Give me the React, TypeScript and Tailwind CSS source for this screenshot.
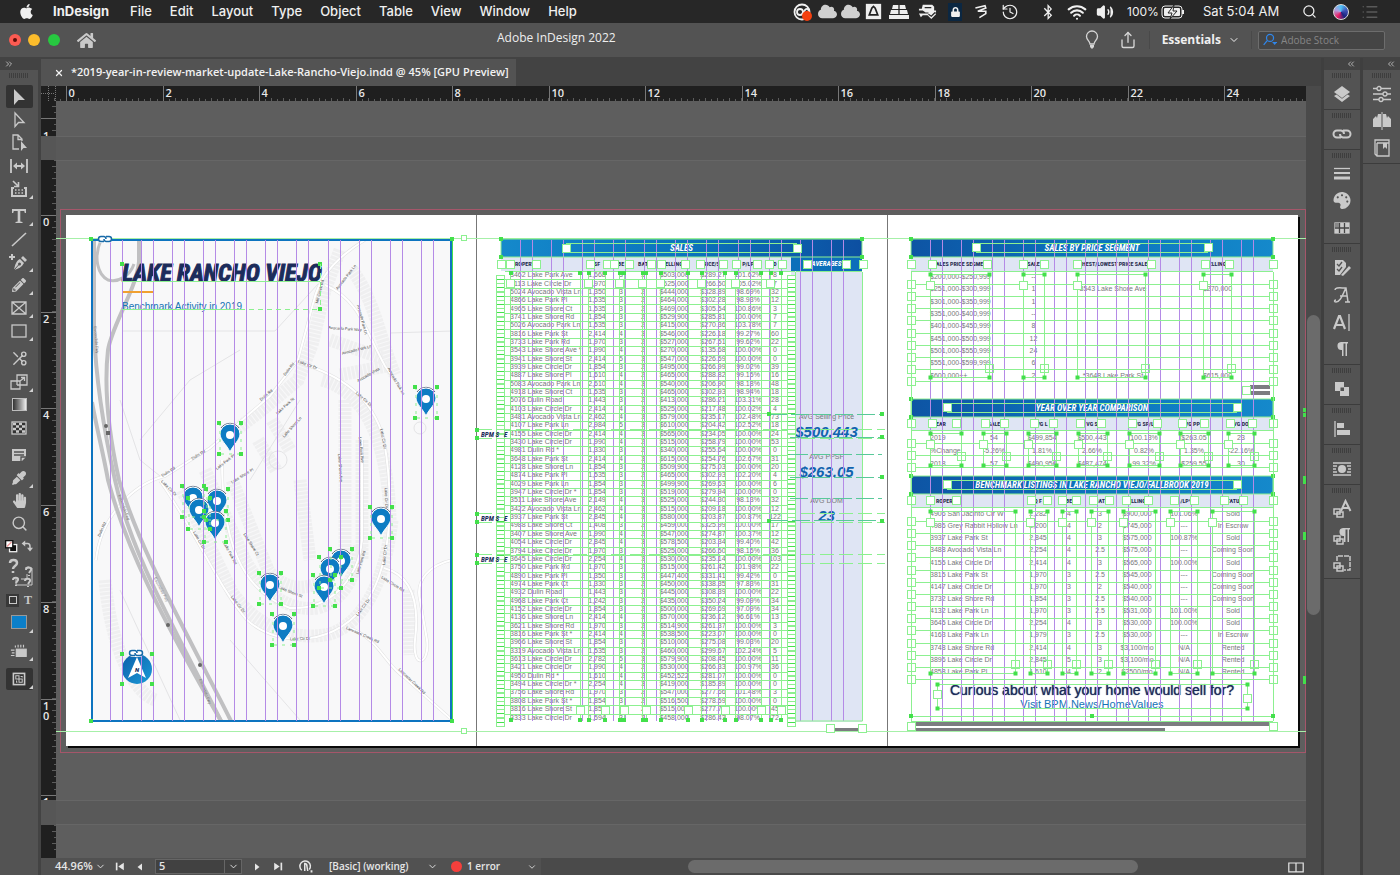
import { ReactNode } from 'react'
import {
  FaApple,
  FaBluetoothB,
  FaEyeDropper,
  FaHandPaper,
  FaHome,
  FaLock,
  FaPalette,
  FaPenNib,
  FaPencilAlt,
  FaCloud,
} from 'react-icons/fa'
import {
  ChevronDown,
  ChevronsLeft,
  ChevronsRight,
  History,
  List,
  Scissors,
  Search,
  Share,
  Volume2,
  Wifi,
  X,
} from 'lucide-react'

type Sale = [string, string, string, string, string, string, string, string]

const sales: Sale[] = [
  ['3462 Lake Park Ave', '1,668', '3', '3', '$503,000', '$289.27', '101.62%', '8'],
  ['3113 Lake Circle Dr', '1,970', '3', '3', '$525,000', '$266.50', '105.02%', '7'],
  ['5024 Avocado Vista Ln', '1,350', '3', '2', '$444,000', '$328.89', '98.69%', '32'],
  ['4866 Lake Park Pl', '1,535', '3', '2', '$464,000', '$302.28', '98.93%', '12'],
  ['4965 Lake Shore Ct', '1,535', '3', '2', '$469,000', '$305.54', '100.86%', '3'],
  ['3741 Lake Shore Rd', '1,854', '3', '2', '$529,900', '$285.81', '100.00%', '7'],
  ['5026 Avocado Park Ln', '1,535', '3', '2', '$415,000', '$270.36', '103.78%', '7'],
  ['3816 Lake Park St', '2,414', '4', '3', '$546,000', '$226.18', '99.27%', '60'],
  ['3733 Lake Park Rd', '1,970', '3', '2', '$527,000', '$267.51', '99.62%', '22'],
  ['3543 Lake Shore Ave *', '1,990', '4', '2', '$270,000', '$135.68', '100.00%', '0'],
  ['3941 Lake Shore St', '2,414', '5', '3', '$547,000', '$226.59', '100.00%', '0'],
  ['3939 Lake Circle Dr', '1,854', '3', '2', '$495,000', '$266.99', '99.02%', '39'],
  ['4887 Lake Shore Pl', '1,610', '4', '2', '$465,000', '$288.82', '99.15%', '16'],
  ['5083 Avocado Park Ln', '2,610', '4', '3', '$540,000', '$206.90', '98.18%', '48'],
  ['4918 Lake Shore Ct', '1,535', '3', '2', '$465,000', '$302.93', '98.94%', '18'],
  ['5076 Dulin Road', '1,443', '3', '2', '$413,000', '$286.21', '103.31%', '28'],
  ['4103 Lake Circle Dr', '2,414', '4', '3', '$525,000', '$217.48', '100.02%', '4'],
  ['3481 Avocado Vista Ln', '2,462', '4', '3', '$579,000', '$235.17', '102.48%', '73'],
  ['4107 Lake Park Ln', '2,984', '5', '3', '$610,000', '$204.42', '102.52%', '18'],
  ['4155 Lake Circle Dr', '2,414', '4', '3', '$565,000', '$234.05', '100.00%', '24'],
  ['3430 Lake Circle Dr', '1,990', '4', '2', '$515,000', '$258.79', '100.00%', '53'],
  ['4981 Dulin Rd *', '1,330', '3', '2', '$340,000', '$255.64', '100.00%', '0'],
  ['3648 Lake Park St', '2,414', '4', '3', '$615,000', '$254.76', '102.67%', '31'],
  ['4128 Lake Shore Ln', '1,854', '3', '2', '$509,900', '$275.03', '100.00%', '20'],
  ['4874 Lake Park Pl', '1,535', '3', '2', '$465,000', '$302.93', '102.20%', '4'],
  ['4029 Lake Park Ln', '1,854', '3', '2', '$499,900', '$269.63', '100.00%', '6'],
  ['3947 Lake Circle Dr *', '1,854', '3', '2', '$519,000', '$279.94', '100.00%', '0'],
  ['3511 Lake Shore Ave', '2,149', '4', '3', '$525,000', '$244.30', '98.13%', '32'],
  ['3422 Avocado Vista Ln', '2,462', '4', '3', '$515,000', '$209.18', '100.00%', '12'],
  ['3937 Lake Park St', '2,845', '4', '3', '$580,000', '$203.87', '100.87%', '122'],
  ['4988 Lake Shore Ct', '1,408', '3', '2', '$459,000', '$325.99', '100.00%', '17'],
  ['3407 Lake Shore Ave', '1,990', '4', '2', '$547,000', '$274.87', '100.37%', '12'],
  ['4054 Lake Circle Dr', '2,845', '4', '3', '$578,500', '$203.34', '99.40%', '42'],
  ['3794 Lake Circle Dr', '1,970', '3', '2', '$525,000', '$266.50', '98.15%', '36'],
  ['3645 Lake Circle Dr', '2,254', '4', '3', '$530,000', '$235.14', '100.00%', '103'],
  ['3750 Lake Park Rd', '1,970', '3', '2', '$515,000', '$261.42', '101.98%', '22'],
  ['4890 Lake Park Pl', '1,350', '3', '2', '$447,400', '$331.41', '99.42%', '0'],
  ['4974 Lake Park Ct', '1,330', '3', '2', '$450,000', '$338.35', '97.83%', '31'],
  ['4932 Dulin Road', '1,443', '3', '2', '$445,000', '$308.39', '100.00%', '22'],
  ['4968 Lake Park Ct', '1,242', '3', '2', '$435,000', '$350.24', '99.09%', '34'],
  ['4152 Lake Circle Dr', '1,854', '3', '2', '$500,000', '$269.69', '97.09%', '34'],
  ['4136 Lake Shore Ln', '2,414', '4', '3', '$570,000', '$236.12', '96.61%', '13'],
  ['3621 Lake Shore Rd', '1,970', '3', '2', '$514,900', '$261.37', '100.00%', '3'],
  ['3816 Lake Park St *', '2,414', '4', '3', '$538,500', '$223.07', '100.00%', '0'],
  ['3966 Lake Shore St', '1,854', '3', '2', '$510,000', '$275.08', '99.03%', '20'],
  ['3319 Avocado Vista Ln', '1,535', '3', '2', '$460,000', '$299.67', '102.24%', '5'],
  ['3613 Lake Circle Dr', '2,782', '5', '3', '$579,900', '$208.45', '100.00%', '11'],
  ['3421 Lake Circle Dr', '1,990', '4', '2', '$530,000', '$266.33', '100.97%', '36'],
  ['4950 Dulin Rd *', '1,610', '4', '2', '$452,522', '$281.07', '100.00%', '0'],
  ['3494 Lake Circle Dr *', '2,254', '4', '3', '$419,000', '$185.89', '100.00%', '0'],
  ['3756 Lake Shore Rd', '1,970', '3', '2', '$547,000', '$277.66', '101.48%', '3'],
  ['3808 Lake Park St *', '1,854', '3', '2', '$516,500', '$278.59', '100.00%', '0'],
  ['3816 Lake Shore St', '1,854', '3', '2', '$515,000', '$277.78', '100.00%', '45'],
  ['3333 Lake Circle Dr', '1,594', '3', '2', '$458,000', '$286.43', '98.07%', '72'],
]

const segments = [
  ['$200,000-$250,999', '--', '', ''],
  ['$251,000-$300,999', '1', '3543 Lake Shore Ave', '$270,000'],
  ['$301,000-$350,999', '1', '', ''],
  ['$351,000-$400,999', '--', '', ''],
  ['$401,000-$450,999', '8', '', ''],
  ['$451,000-$500,999', '12', '', ''],
  ['$501,000-$550,999', '24', '', ''],
  ['$551,000-$599,999', '6', '', ''],
  ['$600,000++', '2', '*3648 Lake Park St', '$615,000'],
]

const comparison = [
  ['2019', '54', '$499,854', '$500,443', '100.13%', '$263.05', '23', ''],
  ['%Change', '-5.26%', '1.81%', '2.66%', '0.82%', '1.35%', '-22.16%', ''],
  ['2018', '57', '$490,956', '$487,474', '99.32%', '$259.55', '30', ''],
]

const listings = [
  ['4906 San Jacinto Cir W', '2,282', '4', '3', '$900,000', '101.06%', 'Sold', ''],
  ['4986 Grey Rabbit Hollow Ln', '2,200', '4', '2', '$745,000', '---', 'In Escrow', ''],
  ['3937 Lake Park St', '2,845', '4', '3', '$575,000', '100.87%', 'Sold', ''],
  ['3488 Avocado Vista Ln', '2,254', '4', '2.5', '$575,000', '---', 'Coming Soon', ''],
  ['4155 Lake Circle Dr', '2,414', '4', '3', '$565,000', '100.00%', 'Sold', ''],
  ['3815 Lake Park St', '1,970', '3', '2.5', '$545,000', '---', 'Coming Soon', ''],
  ['4147 Lake Circle Dr', '1,970', '3', '2', '$540,000', '---', 'Coming Soon', ''],
  ['3732 Lake Shore Rd', '1,854', '3', '2.5', '$540,000', '---', 'Coming Soon', ''],
  ['4132 Lake Park Ln', '1,970', '3', '2.5', '$531,000', '101.00%', 'Sold', ''],
  ['3645 Lake Circle Dr', '2,254', '4', '3', '$530,000', '100.00%', 'Sold', ''],
  ['4163 Lake Park Ln', '1,979', '3', '2.5', '$530,000', '---', 'In Escrow', ''],
  ['3748 Lake Shore Rd', '2,414', '4', '3', '$3,100/mo', 'N/A', 'Rented', ''],
  ['3896 Lake Circle Dr', '2,845', '5', '3', '$3,100/mo', 'N/A', 'Rented', ''],
  ['4858 Lake Park Pl', '1,610', '4', '2', '$2500/mo', 'N/A', 'Rented', ''],
]

// Head centres of the sale pins
const pins = [
  [230, 435], [426, 399], [193, 498], [217, 501], [199, 510], [215, 523],
  [381, 519], [270, 585], [283, 626], [341, 561], [330, 569], [324, 587],
]

const streets: [string, number, number, number][] = [
  ['Avocado Park Ln', 347, 278, -52],
  ['Mill Creek Rd', 321, 292, -75],
  ['Avocado Park Way', 345, 330, 4],
  ['Avocado Park Ln', 361, 320, 75],
  ['Avocado Park Ln', 357, 351, -14],
  ['Avocado Vista', 369, 376, -30],
  ['Avocado Park Ln', 395, 382, 60],
  ['Dulin Rd', 290, 370, -52],
  ['Dulin Rd', 267, 396, -40],
  ['Lake Cir Dr', 307, 366, 20],
  ['Lake Park St', 286, 407, -42],
  ['Lake Shore Ln', 293, 428, -48],
  ['Lake Cir Dr', 363, 400, 42],
  ['Lake Park Ave', 360, 450, 84],
  ['Lake Cir Dr', 382, 439, 80],
  ['Lake Shore Ave', 339, 468, 86],
  ['Dulin Rd', 199, 456, -32],
  ['Dulin Rd', 169, 473, -32],
  ['Lake Park Pl', 226, 463, -38],
  ['Lake Shore Pl', 243, 477, -32],
  ['Dulin Rd', 103, 530, -66],
  ['Lake Cir Dr', 168, 489, 45],
  ['Lake Cir Dr', 198, 541, 60],
  ['Lake Park Rd', 229, 554, 62],
  ['Lake Shore Ct', 250, 545, 58],
  ['Lake Cir Dr', 237, 605, 52],
  ['Lake Shore St', 290, 593, 22],
  ['Lake Cir Dr', 300, 640, -2],
  ['Lake Park Rd', 362, 563, -72],
  ['Lake Cir Dr', 386, 555, -84],
  ['Lake Cir Dr', 364, 608, -54],
  ['Lake Circle Rd', 392, 585, 32],
  ['Lancaster Creek Rd', 362, 636, 24],
  ['Lancaster Creek Rd', 411, 682, 44],
  ['Lake Cir Dr', 385, 498, 88],
]

const GREEN = '#43e04b'
const LINE = '#8cf090'
const HAIR = '#b48ae6'

const columnStarts = [91, 501, 911]

// One small square grab point on a text or picture frame
const Dot = ({ x, y }: { x: number; y: number }) => (
  <rect x={x - 2} y={y - 2} width="4" height="4" fill={GREEN} />
)

// In and out ports of a text frame
const Port = ({ x, y, solid = true }: { x: number; y: number; solid?: boolean }) => (
  <rect x={x - 3.5} y={y - 3.5} width="8" height="8" fill={solid ? '#fff' : 'none'} stroke={LINE} />
)

const Frame = ({ x1, x2, y1, y2 }: { x1: number; x2: number; y1: number; y2: number }) => (
  <g>
    <rect x={x1} y={y1} width={x2 - x1} height={y2 - y1} fill="none" stroke={LINE} />
    <Dot x={x1} y={y1} />
    <Dot x={x2} y={y1} />
    <Dot x={x1} y={y2} />
    <Dot x={x2} y={y2} />
  </g>
)

const ColumnGuides = () => (
  <g stroke={HAIR}>
    {columnStarts.map((start) =>
      Array.from({ length: 11 }, (_, k) => {
        const left = Math.round(start + k * 31.15 + 18.5) + 0.5
        return <path key={`${start}-${k}`} d={`M${left} 240V721M${left + 12} 240V721`} />
      })
    )}
  </g>
)

const roads = [
  'M96 560C100 520 130 485 165 476L210 448L270 396L298 360L314 300C320 275 340 255 365 240',
  'M297 362C340 375 372 395 384 440C394 500 392 560 368 600C340 645 280 650 247 620C220 590 195 530 160 481',
  'M325 285C360 300 365 330 385 366L402 390',
  'M384 568C410 575 420 600 415 640C412 670 430 665 427 640L420 600C415 580 430 565 452 560',
  'M350 628C380 640 385 665 405 678L452 720',
  'M222 460C222 540 240 590 290 608C330 610 358 580 362 540V440',
]

function MapArt() {
  return (
    <svg viewBox="91 239 361 483" className="block h-full w-full" role="img" aria-label="Map of Lake Rancho Viejo">
      <defs>
        <linearGradient id="badge" x1="0" x2="1" y1="0" y2="1">
          <stop offset="0" stopColor="#0c5ea9" />
          <stop offset="1" stopColor="#1b9bd8" />
        </linearGradient>
      </defs>
      <rect x="91" y="239" width="361" height="483" fill="#f8f8f9" />
      <g fill="none" stroke="#efeff0" strokeWidth="13" strokeDasharray="3 1">
        <path d="M340 250L325 290L312 345L298 380L262 410L228 436" />
        <path d="M352 270C375 300 380 340 395 375" />
        <path d="M330 340L382 358M340 375L392 365M322 380C365 392 388 440 390 520" />
        <path d="M345 400V560M362 440V560" />
        <path d="M182 490L232 592C255 625 290 642 330 634C365 622 385 580 392 520" />
        <path d="M205 470L245 560C262 590 285 612 318 608C345 600 356 575 360 545" />
        <path d="M232 480L268 570C285 592 310 592 330 575M272 420L290 450M258 440L276 470" />
        <path d="M408 590L410 655M300 480L310 560" />
        <path d="M105 580C110 640 130 690 155 700" />
      </g>
      <g fill="none" stroke="#e0e0e1" strokeWidth="3">
        {roads.map((d) => (
          <path key={d} d={d} />
        ))}
      </g>
      <g fill="none" stroke="#fff" strokeWidth="2">
        {roads.map((d) => (
          <path key={d} d={d} />
        ))}
      </g>
      <g fill="none" stroke="#e4e4e6" strokeWidth="1">
        <path d="M122 331H275L318 284M390 333L452 331M120 400L140 460L160 476M250 480L300 400M120 590L180 720M230 640L300 720M140 440L190 380L240 350" />
        <circle cx="420" cy="428" r="6" />
        <circle cx="278" cy="460" r="9" />
      </g>
      <g fill="none" stroke="#c0c0c2">
        <path strokeWidth="4" d="M94 240V330C96 385 106 440 115 480C130 550 170 620 221 721" />
        <path strokeWidth="4" d="M92 402C97 430 103 452 108 480C125 545 160 615 221 721" />
        <path strokeWidth="4" d="M139 240V262C136 290 112 325 108 350C104 385 108 430 119 480C140 550 180 620 231 721" />
        <path strokeWidth="3" d="M101 240C93 258 98 275 108 280C118 283 130 276 134 264" />
      </g>
      <g fill="#666">
        <circle cx="106" cy="426" r="2" />
        <rect x="106" y="431" width="4" height="4" />
        <circle cx="168" cy="625" r="2" />
        <circle cx="200" cy="665" r="2" />
      </g>
      <g fill="#444" fontFamily="Liberation Sans, sans-serif" fontSize="4" textAnchor="middle">
        {streets.map(([name, x, y, angle], i) => (
          <text key={i} transform={`translate(${x} ${y}) rotate(${angle})`}>
            {name}
          </text>
        ))}
        {[
          [123, 508, 70],
          [160, 590, 62],
          [204, 692, 68],
          [95, 340, 85],
        ].map(([x, y, angle]) => (
          <text key={x} fill="#7a7a7c" transform={`translate(${x} ${y}) rotate(${angle})`}>
            Escondido Fwy
          </text>
        ))}
      </g>
      {pins.map(([x, y]) => (
        <g key={`${x}-${y}`} transform={`translate(${x} ${y})`}>
          <path d="M-9 -7A11 11 0 0 1 9 -7" fill="none" stroke="#5d6a80" strokeWidth="1" />
          <path
            d="M0 17C-3 10 -10 5 -10 -1A10 10 0 0 1 10 -1C10 5 3 10 0 17Z"
            fill="#0d7cc3"
            stroke="#fff"
            strokeWidth="1"
          />
          <circle r="4" fill="#fff" />
        </g>
      ))}
      <circle cx="137" cy="669" r="15" fill="url(#badge)" />
      <path d="M137 657L146 678L137 673L128 678Z" fill="#fff" />
      <text x="137" y="672" textAnchor="middle" fontSize="6" fontWeight="900" fontStyle="italic" fontFamily="Roboto, sans-serif" fill="#16305e">
        N
      </text>
    </svg>
  )
}

const Bar = ({ children, reverse }: { children: ReactNode; reverse?: boolean }) => (
  <h2
    className={`h-[18px] text-center text-[9px] leading-[18px] font-bold italic text-white font-['Liberation_Sans_Narrow','Roboto_Condensed','Roboto',sans-serif] ${
      reverse
        ? 'bg-linear-to-r from-[#0e54a4] via-[#0b74bd] to-[#1589cb]'
        : 'bg-linear-to-r from-[#1589cb] via-[#0b74bd] to-[#0d4fa1]'
    }`}
  >
    {children}
  </h2>
)

interface GridTableProps {
  label: string
  heads: string[]
  rows: string[][]
  cols: string[]
  height: string
  inset?: boolean
}

function GridTable({ label, heads, rows, cols, height, inset }: GridTableProps) {
  return (
    <table aria-label={label} className={`w-full table-fixed text-[7px] leading-[8px] text-[#77787b] ${height}`}>
      <colgroup>
        {cols.map((c, i) => (
          <col key={i} className={c} />
        ))}
      </colgroup>
      <thead>
        <tr className="h-[14px] bg-[#dfe5f4] text-[#1f2a4d] font-['Liberation_Sans_Narrow','Roboto_Condensed','Roboto',sans-serif]">
          {heads.map((h, i) => (
            <th
              key={i}
              className={`p-0 text-[6px] font-bold whitespace-nowrap ${i === 0 ? (inset ? 'pl-[25px] text-left' : 'pl-[14px] text-left') : ''}`}
            >
              {h}
            </th>
          ))}
        </tr>
      </thead>
      <tbody>
        {rows.map((row, r) => (
          <tr key={r}>
            {row.map((cell, i) => (
              <td
                key={i}
                className={`p-0 whitespace-nowrap ${i === 0 ? (inset ? 'pl-[19px] text-left' : 'pl-[9px] text-left') : 'text-center'}`}
              >
                {cell}
              </td>
            ))}
          </tr>
        ))}
      </tbody>
    </table>
  )
}

const Average = ({ label, value }: { label: string; value: string }) => (
  <div className="text-center">
    <dt className="text-[7px] leading-[10px] text-[#77787b]">{label}</dt>
    <dd className="text-[15px] leading-[20px] font-bold italic text-[#1163ae]">{value}</dd>
  </div>
)

function Spread() {
  return (
    <div className="absolute top-[114px] left-[10px] flex h-[531px] bg-white shadow-[2px_2px_0_#0a0a0a] font-['Liberation_Sans',Arial,sans-serif]">
      <section className="relative w-[411px] border-r border-[#777] pt-[24px] pl-[25px]">
        <div className="h-[483px] w-[361px] outline-2 -outline-offset-2 outline-[#0d74c0]">
          <MapArt />
        </div>
        <div className="absolute top-[46px] left-[56px]">
          <h1 className="text-[24px] leading-[24px] font-bold italic whitespace-nowrap text-[#1c2c5b] [-webkit-text-stroke:1px_#1c2c5b] font-['Liberation_Sans_Narrow','Roboto_Condensed','Roboto',sans-serif]">
            LAKE RANCHO VIEJO
          </h1>
          <div className="mt-[6px] h-[2px] w-[31px] bg-[#f0a030]" />
          <p className="mt-[8px] text-[10px] leading-[12px] text-[#1573b6]">Benchmark Activity in 2019</p>
        </div>
      </section>

      <section className="w-[411px] border-r border-[#777] pt-[24px] pr-[25px] pl-[24px]">
        <Bar>SALES</Bar>
        <div className="flex">
          <div className="w-[290px]">
            <GridTable
              label="Sales"
              heads={['ROPERT', 'SF', 'BE', 'BAT', 'ELLING', 'RICE/SF', 'P/LP', 'D', '']}
              rows={sales}
              cols={['w-[85px]', 'w-[22px]', 'w-[26px]', 'w-[18px]', 'w-[44px]', 'w-[34px]', 'w-[36px]', 'w-[18px]', 'w-[7px]']}
              height="h-[465px]"
            />
          </div>
          <div className="flex-1 bg-[#dfe5f4]">
            <h3 className="h-[14px] bg-[#0c6fba] text-center text-[7px] leading-[14px] font-bold italic text-white font-['Liberation_Sans_Narrow','Roboto_Condensed','Roboto',sans-serif]">
              AVERAGES
            </h3>
            <dl className="pt-[141px]">
              <Average label="AVG Selling Price" value="$500,443" />
              <div className="h-[10px]" />
              <Average label="AVG PPSF" value="$263.05" />
              <div className="h-[14px]" />
              <Average label="AVG DOM" value="23" />
            </dl>
          </div>
        </div>
        <div className="mt-[6px] ml-[333px] h-[4px] w-[25px] bg-[#7c7c80]" />
      </section>

      <section className="w-[410px] pt-[24px] pr-[25px] pl-[23px]">
        <Bar reverse>SALES BY PRICE SEGMENT</Bar>
        <GridTable
          inset
          label="Sales by price segment"
          heads={['ALES PRICE SEGMEN', 'SALE', 'GHEST/LOWEST PRICE SALE', 'ELLING']}
          rows={segments}
          cols={['w-[92px]', 'w-[61px]', 'w-[98px]', 'w-[111px]']}
          height="h-[125px]"
        />
        <div className="mt-[3px] mr-[3px] ml-auto h-[4px] w-[20px] bg-[#7c7c80]" />
        <div className="mt-[2px] mr-[3px] mb-[4px] ml-auto h-[4px] w-[20px] bg-[#7c7c80]" />
        <Bar reverse>YEAR OVER YEAR COMPARISON</Bar>
        <GridTable
          inset
          label="Year over year comparison"
          heads={['EAR', 'SALE', 'VG L', 'VG S', 'VG SP/L', 'VG PPS', 'VG DO', '']}
          rows={comparison}
          cols={['w-[55px]', 'w-[56px]', 'w-[40px]', 'w-[60px]', 'w-[44px]', 'w-[56px]', 'w-[38px]', 'w-[13px]']}
          height="h-[54px]"
        />
        <div className="h-[5px]" />
        <Bar reverse>BENCHMARK LISTINGS IN LAKE RANCHO VIEJO/FALLBROOK 2019</Bar>
        <GridTable
          inset
          label="Benchmark listings"
          heads={['ROPERT', 'Q F', 'BE', 'BAT', 'ELLING', '%/LP*', 'TATU', '']}
          rows={listings}
          cols={['w-[112px]', 'w-[30px]', 'w-[32px]', 'w-[30px]', 'w-[44px]', 'w-[50px]', 'w-[48px]', 'w-[16px]']}
          height="h-[184px]"
        />
        <div className="pt-[4px] text-center">
          <p className="text-[14px] leading-[16px] whitespace-nowrap text-[#1c2c5b] [text-shadow:0_0_1px_#1c2c5b]">
            Curious about what your home would sell for?
          </p>
          <a href="#home-values" className="block text-[11px] leading-[13px] text-[#1573b6]">
            Visit BPM.News/HomeValues
          </a>
        </div>
        <div className="mt-[10px] ml-[4px] h-[5px] w-[354px] bg-[#7c7c80]" />
        <div className="mt-[2px] ml-[4px] h-[3px] w-[250px] bg-[#7c7c80]" />
      </section>
    </div>
  )
}

const salesColumns = [
  [510, 580], [588, 605], [619, 624], [642, 646], [660, 688], [701, 725], [735, 761], [770, 781],
]
const salesHeadPorts = [501, 510, 536, 590, 607, 614, 629, 651, 661, 685, 700, 723, 736, 757, 769, 782, 807, 846, 863]

const tableFrames = [
  { top: 275, bottom: 378, ports: [285, 368], cols: [[930, 989], [1023, 1044], [1077, 1145], [1203, 1231]] },
  { top: 434, bottom: 466, ports: [444, 456], cols: [[930, 961], [983, 1006], [1028, 1056], [1078, 1107], [1129, 1159], [1180, 1208], [1228, 1254]] },
  { top: 512, bottom: 674, ports: [522, 664], cols: [[930, 1015], [1030, 1047], [1062, 1076], [1091, 1108], [1123, 1155], [1170, 1197], [1212, 1254]] },
]

const rightHeadPorts: [number, number[]][] = [
  [264, [932, 987, 1023, 1044, 1077, 1151, 1205, 1229]],
  [423, [932, 956, 985, 1004, 1034, 1053, 1080, 1101, 1132, 1157, 1182, 1204, 1230, 1252]],
  [500, [930, 956, 1031, 1047, 1062, 1076, 1093, 1109, 1126, 1148, 1174, 1194, 1224, 1243]],
]

const rightRules: [number, number][] = [
  [284, 9],
  [443, 3],
  [521, 14],
]

const Guides = () => (
  <svg viewBox="56 101 1250 757" className="pointer-events-none absolute top-0 left-0 h-[757px] w-[1250px]" aria-hidden="true">
    <g fill="#595959">
      <rect x="56" y="136" width="1250" height="24" />
      <rect x="56" y="800" width="1250" height="25" />
    </g>
    <path d="M56 136.500H1306M56 160.500H1306M56 800.500H1306M56 824.500H1306" stroke="#666" />
    <rect x="60.500" y="209.500" width="1245" height="543" fill="none" stroke="#a5566a" />
    <path d="M56 238.500H1306M56 731.500H1306" stroke="#a6f0a8" />
    <ColumnGuides />

    {/* Picture frame on the cover */}
    <path d="M452.500 240V721" stroke={GREEN} />
    {[[91, 239], [452, 239], [91, 721], [452, 721], [122, 264], [320, 264], [320, 309], [122, 654], [152, 654], [122, 684], [152, 684]].map(([x, y]) => (
      <Dot key={`${x}-${y}`} x={x} y={y} />
    ))}
    <path d="M122 281.500H320M122 309.500H240" stroke={LINE} />
    <path d="M240 309.500H320M320.500 264V309" stroke={LINE} strokeDasharray="5 4" />
    {[[464, 238], [464, 731]].map(([x, y]) => (
      <rect key={y} x={x - 2.5} y={y - 2.5} width="5" height="5" fill="#fff" stroke={LINE} />
    ))}
    {pins.map(([x, y]) => (
      <g key={`${x}-${y}`}>
        <path d={`M${x - 10} ${y - 12}V${y + 19}H${x + 11}V${y - 12}`} fill="none" stroke={LINE} strokeDasharray="3 5" />
        <Dot x={x - 11} y={y - 12} />
        <Dot x={x + 11} y={y - 12} />
        <Dot x={x - 11} y={y + 19} />
        <Dot x={x + 11} y={y + 19} />
      </g>
    ))}
    {[[105, 239], [136, 653]].map(([x, y]) => (
      <g key={x} fill="none">
        <rect x={x - 7} y={y - 4} width="14" height="8" rx="4" fill="#fff" />
        <path
          d={`M${x - 1} ${y + 2.5}H${x - 4}A2.500 2.500 0 0 1 ${x - 4} ${y - 2.5}H${x - 1}A2.500 2.500 0 0 1 ${x + 1} ${y}M${x + 1} ${y - 2.5}H${x + 4}A2.500 2.500 0 0 1 ${x + 4} ${y + 2.5}H${x + 1}A2.500 2.500 0 0 1 ${x - 1} ${y}`}
          stroke="#1669a8"
          strokeWidth="1.500"
        />
      </g>
    ))}

    {/* Sales sheet */}
    <Frame x1={501} x2={862} y1={239} y2={257} />
    <path d="M566 243.500H797M566 252.500H797" stroke={LINE} />
    <Port x={566} y={248} />
    <Port x={797} y={248} />
    {salesHeadPorts.map((x) => (
      <Port key={x} x={x} y={264} />
    ))}
    <path d="M505 271.500H795M796 271.500H862M795.500 272V721H862.500V272" fill="none" stroke={LINE} />
    {sales.slice(1).map((row, i) => (
      <path key={row[0] + i} d={`M496 ${Math.round(271 + (i + 1) * 8.35) + 0.5}H796`} stroke={LINE} />
    ))}
    {sales.map((row, i) => (
      <g key={row[0] + i}>
        <Port x={500} y={Math.round(279 + i * 8.35)} />
        <Port x={791} y={Math.round(279 + i * 8.35)} />
        <path d={`M497 ${Math.round(279 + i * 8.35) + 0.5}H504M788 ${Math.round(279 + i * 8.35) + 0.5}H795`} stroke={GREEN} />
      </g>
    ))}
    {salesColumns.map(([a, b]) => (
      <g key={a}>
        <path d={`M${a + 0.5} 273V720M${b + 0.5} 273V720`} stroke={LINE} />
        <Dot x={a + 1} y={273} />
        <Dot x={b} y={273} />
        <Dot x={a + 1} y={720} />
        <Dot x={b} y={720} />
        <Port x={a} y={283} />
        <Port x={b} y={710} />
      </g>
    ))}
    {[434, 518, 559].map((y) => (
      <g key={y}>
        <path d={`M478 ${y - 4.5}H885M478 ${y + 4.5}H885`} stroke={LINE} strokeDasharray="14 5" />
        <Dot x={477} y={y - 4} />
        <Dot x={477} y={y + 4} />
        <g fontFamily="Liberation Sans Narrow, Roboto Condensed, Roboto, sans-serif" fontSize="7" fontWeight="700" fontStyle="italic" fill="#1c2c5b">
          <text x="481" y={y + 3}>BPM S</text>
          <text x="504" y={y + 3}>E</text>
        </g>
      </g>
    ))}
    <path d="M769 414.500H882M790 437.500H882M790 454.500H882M790 477.500H882M790 498.500H882M770 520.500H882" stroke="#59c99a" strokeDasharray="18 4" />
    {[[769, 414], [882, 414], [882, 437], [882, 477], [882, 521], [769, 521]].map(([x, y]) => (
      <Dot key={`${x}-${y}`} x={x} y={y} />
    ))}
    <Port x={830} y={728} />
    <Port x={862} y={728} />

    {/* Price segment sheet */}
    {[[239, 257], [399, 417], [476, 494]].map(([y1, y2], i) => {
      const inset = i === 0 ? [976, 1208] : [947, 1237]
      return (
        <g key={y1}>
          <Frame x1={911} x2={1273} y1={y1} y2={y2} />
          <path d={`M${inset[0]} ${y1 + 4.5}H${inset[1]}M${inset[0]} ${y1 + 13.5}H${inset[1]}`} stroke={LINE} />
          <Port x={inset[0]} y={y1 + 8} />
          <Port x={inset[1]} y={y1 + 8} />
        </g>
      )
    })}
    {rightHeadPorts.map(([y, xs]) => (
      <g key={y}>
        <Port x={911} y={y} />
        <Port x={1273} y={y} />
        <path d={`M911 ${y + 7.5}H1273`} stroke={LINE} />
        {xs.map((x) => (
          <Port key={x} x={x} y={y} />
        ))}
      </g>
    ))}
    {rightRules.map(([top, n]) =>
      Array.from({ length: n }, (_, i) => {
        const y = Math.round(top + i * 12.15) + 0.5
        return (
          <g key={y}>
            <path d={`M911 ${y}H1273`} stroke={LINE} />
            <Port x={911} y={y - 0.5} />
            <Port x={1273} y={y - 0.5} />
          </g>
        )
      })
    )}
    {tableFrames.map((t) =>
      t.cols.map(([a, b]) => (
        <g key={`${t.top}-${a}`}>
          <Frame x1={a + 0.5} x2={b + 0.5} y1={t.top - 0.5} y2={t.bottom - 0.5} />
          <Port x={a} y={t.ports[0]} />
          <Port x={b} y={t.ports[1]} solid={false} />
        </g>
      ))
    )}
    <Frame x1={937.5} x2={1247.5} y1={684.5} y2={708.5} />
    <Port x={937} y={694} />
    <Port x={1247} y={698} />
    <path d="M911 716.500H1273M911 721.500H1273M911.500 272V721M1273.500 272V721" stroke={LINE} />
    <Dot x={1092} y={716} />
    <Dot x={911} y={716} />
    <Dot x={1273} y={716} />
    <Port x={911} y={726} />
    <Port x={1273} y={726} />
    <Port x={1246} y={390} />
    {[[1305, 410], [1305, 415], [1305, 478], [1305, 482], [1305, 534], [1305, 538], [1305, 678], [1305, 682]].map(([x, y]) => (
      <Dot key={y} x={x} y={y} />
    ))}
  </svg>
)

const inches = Array.from({ length: 13 }, (_, i) => i * 2)

const TopRuler = () => (
  <svg className="block h-[15px] w-full bg-[#1f1f1f]" aria-hidden="true">
    {Array.from({ length: 210 }, (_, i) => {
      const x = Math.round(25 - 12 + i * 6.03) + 0.5
      return <path key={i} d={`M${x} ${i % 2 ? 13 : 12}V15`} stroke="#5c5c5c" />
    })}
    <path d="M0 7.500H14M7.500 0V15M14.500 0V15" stroke="#777" strokeDasharray="1 1" />
    {inches.map((n, i) => {
      const x = Math.round(25 + i * 96.5) + 0.5
      return (
        <g key={n}>
          <path d={`M${x} 0V15`} stroke="#777" />
          <text x={x + 2} y="11" fontSize="11" fontFamily="Open Sans, sans-serif" fontWeight="600" fill="#e8e8e8">
            {n}
          </text>
        </g>
      )
    })}
  </svg>
)

const LeftRuler = () => (
  <svg className="block h-full w-[15px] shrink-0 bg-[#1f1f1f]" aria-hidden="true">
    {Array.from({ length: 124 }, (_, i) => {
      const y = Math.round(5 + i * 6.04) + 0.5
      return <path key={i} d={`M${i % 2 ? 13 : 11} ${y}H15`} stroke="#5c5c5c" />
    })}
    {['1', '0', '2', '4', '6', '8', '1', '1'].map((n, i) => {
      const y = Math.round(114 + (i - 1) * 96.7) + 0.5
      return (
        <g key={i} fontSize="11" fontFamily="Open Sans, sans-serif" fontWeight="600" fill="#e8e8e8">
          <path d={`M0 ${y}H15`} stroke="#777" />
          <text x="2" y={i === 0 ? 39 : y + 10}>
            {n}
          </text>
          {i === 6 && (
            <text x="2" y={y + 20}>
              0
            </text>
          )}
        </g>
      )
    })}
    <rect x="0" y="35" width="15" height="24" fill="#565656" />
    <rect x="0" y="699" width="15" height="25" fill="#565656" />
  </svg>
)

const Glyph = ({ children, size = 20, label }: { children: ReactNode; size?: number; label?: string }) => (
  <svg
    viewBox="0 0 20 20"
    width={size}
    height={size}
    fill="none"
    stroke="currentColor"
    strokeWidth="1.3"
    aria-label={label}
    aria-hidden={label ? undefined : true}
  >
    {children}
  </svg>
)

interface Tool {
  name: string
  icon: ReactNode
  more?: boolean
  active?: boolean
}

const toolGroups: Tool[][] = [
  [
    { name: 'Selection Tool', active: true, icon: <Glyph><path d="M5 2V18L9.500 13H16Z" fill="currentColor" stroke="none" /></Glyph> },
    { name: 'Direct Selection Tool', icon: <Glyph><path d="M6 3V16.500L9.500 12.500H15Z" /></Glyph> },
    { name: 'Page Tool', icon: <Glyph><path d="M13 8V6L9 2H4V16H10M9 2V6.500H13" /><path d="M12 8V18L14.500 15H18Z" fill="currentColor" stroke="none" /></Glyph> },
    { name: 'Gap Tool', icon: <Glyph><path d="M2 3V17M18 3V17M5 10H15" strokeWidth="1.800" /><path d="M4 10L8 6.500V13.500ZM16 10L12 6.500V13.500Z" fill="currentColor" stroke="none" /></Glyph> },
    { name: 'Content Collector Tool', more: true, icon: <Glyph><path d="M5 9H3V17H17V9H15" strokeWidth="2" /><path d="M4 2L9 7M9.500 3V7.500H5" strokeWidth="1.600" /><path d="M6 11H7.500M9.200 11H10.700M12.500 11H14M6 14H7.500M9.200 14H10.700M12.500 14H14" strokeWidth="1.600" /></Glyph> },
  ],
  [
    { name: 'Type Tool', more: true, icon: <Glyph><path d="M3 3H17V7H15.800L15.200 5H11.300V15.500L13.500 16V17H6.500V16L8.700 15.500V5H4.800L4.200 7H3Z" fill="currentColor" stroke="none" /></Glyph> },
    { name: 'Line Tool', icon: <Glyph><path d="M3 17L17 4" strokeWidth="1.600" /></Glyph> },
    { name: 'Pen Tool', more: true, icon: <Glyph><path d="M5 18C6 13 7 9 11 7L15 11C13 15 9 17 5 18ZM12 6L14 4L18 8L16 10Z" fill="currentColor" stroke="none" /><circle cx="10.500" cy="12" r="1.500" fill="#535353" stroke="none" /><path d="M5 18L10 12.500" stroke="#535353" strokeWidth="1" /><path d="M0 5H6M3 2V8" strokeWidth="2" /></Glyph> },
    { name: 'Pencil Tool', more: true, icon: <FaPencilAlt className="h-[14px] w-[14px]" /> },
    { name: 'Rectangle Frame Tool', more: true, icon: <Glyph><path d="M3 4H17V16H3ZL17 16M17 4L3 16" /></Glyph> },
    { name: 'Rectangle Tool', more: true, icon: <Glyph><rect x="3" y="4" width="14" height="12" /></Glyph> },
  ],
  [
    { name: 'Scissors Tool', icon: <Scissors className="h-[17px] w-[17px] rotate-180" strokeWidth={2} /> },
    { name: 'Free Transform Tool', more: true, icon: <Glyph><path d="M2 9H11V17H2ZM8 13V3H18V13H8M11 9L15 6M12 5.500H15.500V9" /></Glyph> },
    { name: 'Gradient Swatch Tool', icon: <span className="block h-[13px] w-[15px] border border-[#bdbdbd] bg-linear-to-r from-[#333] to-[#eee]" /> },
    { name: 'Gradient Feather Tool', icon: <Glyph><rect x="3" y="4" width="14" height="12" fill="#333" /><path d="M4 6H7M10 6H13M7 8.500H10M13 8.500H16M4 11H7M10 11H13M7 13.500H10M13 13.500H16" strokeWidth="2.500" /></Glyph> },
  ],
  [
    { name: 'Note Tool', icon: <Glyph><path d="M3 4H17V12L13 16H3Z" fill="currentColor" stroke="none" /><path d="M5 7H15M5 10H15M12 17V12H17" stroke="#535353" /></Glyph> },
    { name: 'Eyedropper Tool', more: true, icon: <FaEyeDropper className="h-[14px] w-[14px]" /> },
    { name: 'Hand Tool', icon: <FaHandPaper className="h-[15px] w-[15px]" /> },
    { name: 'Zoom Tool', icon: <Search className="h-[17px] w-[17px]" strokeWidth={2} /> },
  ],
]

const groupSpacing = ['', 'mt-[4px]', 'mt-[5px]', 'mt-[4px]']

const Corner = () => <span className="absolute right-0 bottom-[1px] border-b-4 border-l-4 border-b-[#d0d0d0] border-l-transparent" />

const Grip = () => (
  <span className="block h-[5px] w-[20px] bg-[repeating-linear-gradient(90deg,#3e3e3e_0,#3e3e3e_1px,transparent_1px,transparent_2px)]" />
)

function Toolbar() {
  return (
    <aside className="flex w-[41px] shrink-0 flex-col border-r-[3px] border-[#434343] bg-[#535353] text-[#c9c9c9]">
      <div className="flex h-[12px] items-center bg-[#434343] pl-[4px]">
        <ChevronsRight className="h-[10px] w-[10px]" />
      </div>
      <div className="flex flex-col items-center">
        <div className="pt-[3px] pb-[7px]">
          <Grip />
        </div>
        {toolGroups.map((group, g) => (
          <div key={g} className={groupSpacing[g]}>
            {group.map((tool) => (
              <button
                key={tool.name}
                type="button"
                aria-label={tool.name}
                className={`relative flex h-[23px] w-[27px] items-center justify-center rounded-[2px] ${tool.active ? 'bg-[#333]' : ''}`}
              >
                {tool.icon}
                {tool.more && <Corner />}
              </button>
            ))}
          </div>
        ))}
        <div className="flex h-[22px] w-full items-center justify-between px-[5px]">
          <button type="button" aria-label="Default fill and stroke">
            <Glyph size={13}>
              <rect x="7" y="7" width="11" height="11" fill="#111" stroke="#eee" strokeWidth="2" />
              <rect x="1" y="1" width="11" height="11" fill="#fff" stroke="#111" strokeWidth="2" />
              <path d="M3 10L10 3" stroke="#e99" strokeWidth="2" />
            </Glyph>
          </button>
          <button type="button" aria-label="Swap fill and stroke">
            <Glyph size={12}>
              <path d="M6 6H11C14 6 15 8 15 11V14" strokeWidth="2.500" />
              <path d="M1 6L7 1V11ZM15 19L10 13H20Z" fill="currentColor" stroke="none" />
            </Glyph>
          </button>
        </div>
        <button type="button" aria-label="Fill and stroke" className="h-[34px] w-[28px]">
          <svg viewBox="0 0 28 34" className="block h-full w-full" fill="none" stroke="currentColor">
            <path d="M5 6C5 2 12 2 12 6C12 9 8 9 8 12M8 14V16" strokeWidth="2.500" />
            <path d="M11 22V28H27V11H20M16 22H22V17" />
            <path d="M21 13C21 9 27 10 26 13L24 16M24 18V19M20 24C20 21 26 21 25 24L23 27M23 29V30M8 23C8 20 14 20 13 23L11 26M11 28V29" strokeWidth="2" />
          </svg>
        </button>
        <div className="mt-[2px] flex h-[14px] w-full items-center justify-between px-[6px]">
          <button type="button" aria-label="Formatting affects container" className="flex h-[13px] w-[13px] items-center justify-center bg-[#383838]">
            <span className="h-[8px] w-[8px] border border-[#c9c9c9]" />
          </button>
          <button type="button" aria-label="Formatting affects text" className="text-[12px] leading-[14px] font-bold font-['Liberation_Serif',serif]">
            T
          </button>
        </div>
        <button type="button" aria-label="Apply color" className="relative mt-[3px] flex h-[24px] w-[27px] items-center justify-center">
          <span className="h-[14px] w-[16px] border border-[#999] bg-[#0b7fc9]" />
          <Corner />
        </button>
        <button type="button" aria-label="View options" className="relative mt-[5px] flex h-[23px] w-[27px] items-center justify-center">
          <Glyph size={18}>
            <rect x="7" y="8" width="11" height="8" fill="currentColor" />
            <path d="M1 9H5M2 12H5M1 15H5M6 4V6M9 3V6M12 3V6M15 3V6" />
          </Glyph>
          <Corner />
        </button>
        <button type="button" aria-label="Screen mode" className="relative mt-[6px] flex h-[22px] w-[27px] items-center justify-center rounded-[2px] bg-[#333]">
          <Glyph size={16}>
            <rect x="3" y="3" width="14" height="14" strokeWidth="2" />
            <path d="M6 6H10V10H6ZM10 10H14V14H10ZM12 7H14V8M7 12V14H8" />
          </Glyph>
          <Corner />
        </button>
      </div>
    </aside>
  )
}

const smallFrames = <path d="M2 10H8V15H2ZM5 13H11V18H5Z" strokeWidth="1.500" />

const Pilcrow = ({ x = 0, y = 0 }: { x?: number; y?: number }) => (
  <path
    transform={`translate(${x} ${y})`}
    d="M9 3H16V4.500H15V17H13.500V4.500H11.500V17H10V11A4 4 0 0 1 9 3Z"
    fill="currentColor"
    stroke="none"
  />
)

const dockGroups: [string, ReactNode][][] = [
  [['Layers', <Glyph><path d="M10 2L18 8L10 14L2 8Z" fill="currentColor" stroke="none" /><path d="M2 12L4.500 10.500L10 14.800L15.500 10.500L18 12L10 18Z" fill="currentColor" stroke="none" /></Glyph>]],
  [['Links', <Glyph><path d="M9 13.500H5A3.500 3.500 0 0 1 5 6.500H9A3.500 3.500 0 0 1 12 10M11 6.500H15A3.500 3.500 0 0 1 15 13.500H11A3.500 3.500 0 0 1 8 10" strokeWidth="2" /></Glyph>]],
  [
    ['Stroke', <Glyph><path d="M2 4.500H18" /><path d="M2 9H18" strokeWidth="2" /><path d="M2 14H18" strokeWidth="3" /></Glyph>],
    ['Color', <FaPalette className="h-[17px] w-[18px] -scale-x-100" />],
    ['Swatches', <Glyph><rect x="3" y="5" width="14" height="10" fill="currentColor" stroke="#ccc" /><path d="M3 10H17M7.500 5V15M12.500 5V15" stroke="#444" /><rect x="3" y="5" width="4" height="4" fill="#888" stroke="none" /></Glyph>],
  ],
  [
    ['Styles', <Glyph><path d="M3 2H11L14 5V9L8 17H3Z" fill="currentColor" stroke="none" /><path d="M5 6L7 8L10 4M5 11L7 13L10 9" stroke="#535353" /><path d="M9 17L17 8L19 10L11 18Z" fill="currentColor" stroke="none" /></Glyph>],
    ['Glyphs', <Glyph><path d="M3 5C3 2 8 3 14 3L16 17M14 3C11 8 9 17 4 17C2 17 2 15 4 15M8 11H15M13 17H18" strokeWidth="1.500" /></Glyph>],
    ['Character', <Glyph><path d="M2 17L7 4H8L13 17M4 13H11" strokeWidth="2.200" /><path d="M17 2V19" /></Glyph>],
    ['Paragraph', <Glyph><Pilcrow /></Glyph>],
  ],
  [['Pathfinder', <Glyph><path d="M3 3H12V8H17V17H8V12H3Z" fill="currentColor" stroke="none" /><rect x="8.500" y="8.500" width="3.500" height="3.500" fill="#535353" stroke="none" /></Glyph>]],
  [['Align', <Glyph><path d="M3 2V18" /><path d="M5 4H12V9H5ZM5 11H18V16H5Z" fill="currentColor" stroke="none" /></Glyph>]],
  [['Text Wrap', <Glyph><path d="M1 4H19M1 7H5M15 7H19M1 10H4M16 10H19M1 13H5M15 13H19M1 16H19" /><circle cx="10" cy="10" r="4" fill="currentColor" stroke="none" /></Glyph>]],
  [
    ['Character Styles', <Glyph>{smallFrames}<path d="M9 12L13.500 2L18.500 12M10.500 9H17" strokeWidth="2" /></Glyph>],
    ['Paragraph Styles', <Glyph>{smallFrames}<Pilcrow x={2} y={-1} /></Glyph>],
    ['Object Styles', <Glyph><path d="M5 8V3H18V17H12" strokeWidth="1.500" strokeDasharray="5 1" />{smallFrames}</Glyph>],
  ],
]

const libraryGroup: [string, ReactNode][] = [
  ['Properties', <Glyph><path d="M1 4.500H5M9 4.500H19M1 10H11M15 10H19M1 15.500H7M11 15.500H19" /><circle cx="7" cy="4.500" r="2" /><circle cx="13" cy="10" r="2" /><circle cx="9" cy="15.500" r="2" /></Glyph>],
  ['CC Libraries', <Glyph><path d="M1 8L4 5L5 7L6 3H9V16H1ZM19 8L16 5L15 7L14 3H11V16H19Z" fill="currentColor" stroke="none" /><path d="M10 1V19" strokeWidth="1" /></Glyph>],
  ['Pages', <Glyph><path d="M3 2H17V18H5L3 16ZM5 5H17M5 5V18" /><path d="M11 5H15V11L13 9L11 11Z" fill="currentColor" stroke="none" /></Glyph>],
]

const DockGroup = ({ items }: { items: [string, ReactNode][] }) => (
  <div className="flex flex-col items-center border-b border-[#3c3c3c] pt-[3px] pb-[2px]">
    <Grip />
    <div className="h-[2px]" />
    {items.map(([name, icon]) => (
      <button key={name} type="button" aria-label={name} className="flex h-[27px] w-[28px] items-center justify-center">
        {icon}
      </button>
    ))}
  </div>
)

const Dock = () => (
  <aside className="flex shrink-0 border-l-[3px] border-[#3f3f3f] bg-[#535353] text-[#c9c9c9]">
    {[dockGroups, [libraryGroup]].map((groups, i) => (
      <div key={i} className={i === 0 ? 'w-[39px] border-r-[3px] border-[#3f3f3f]' : 'w-[37px]'}>
        <div className="flex h-[12px] items-center justify-end bg-[#434343] pr-[4px]">
          <ChevronsLeft className="h-[10px] w-[10px]" />
        </div>
        {groups.map((items, g) => (
          <DockGroup key={g} items={items} />
        ))}
      </div>
    ))}
  </aside>
)

const menus = ['File', 'Edit', 'Layout', 'Type', 'Object', 'Table', 'View', 'Window', 'Help']

function MenuBar() {
  return (
    <header className="flex h-[23px] shrink-0 items-center justify-between bg-[#272727] pr-[20px] pl-[19px] text-[13px] text-[#f0f0f0] font-['Inter',sans-serif]">
      <nav className="flex items-center" aria-label="Application menu">
        <button type="button" aria-label="Apple menu" className="mr-[10px] w-[15px]">
          <FaApple className="h-[17px] w-[15px]" />
        </button>
        <button type="button" className="mr-[3px] px-[9px] font-bold">
          InDesign
        </button>
        {menus.map((m) => (
          <button key={m} type="button" className="px-[9px] font-medium">
            {m}
          </button>
        ))}
      </nav>
      <div className="flex items-center">
        <span className="w-[25px]">
          <Glyph size={20}>
            <circle cx="9" cy="10" r="7.500" strokeWidth="1.800" />
            <circle cx="7" cy="10" r="3" strokeWidth="1.800" />
            <path d="M9 12L12 8C15 5 17 9 15 12" strokeWidth="1.800" />
            <circle cx="14" cy="14" r="5" fill="#f5400f" stroke="none" />
          </Glyph>
        </span>
        <FaCloud className="mr-[4px] h-[19px] w-[19px] text-[#d0d0d0]" />
        <FaCloud className="mr-[5px] h-[19px] w-[19px] text-[#d0d0d0]" />
        <span className="w-[24px]">
          <Glyph size={17}>
            <rect x="1" y="1" width="18" height="18" fill="#eee" stroke="none" />
            <path d="M8 6L10 4L12 6L15 14H5Z" stroke="#222" strokeWidth="2" />
          </Glyph>
        </span>
        <span className="w-[29px]">
          <Glyph size={20}>
            <path d="M4 3H16L17 7H3ZM2 8H18L19 12H1ZM0 13H20V17H0Z" fill="#eee" stroke="none" />
            <path d="M10 3V12" stroke="#222" />
          </Glyph>
        </span>
        <span className="w-[30px]">
          <Glyph size={19}>
            <path d="M5 3H15L17 5V9H19V11H8L5 9H1V7H4ZM1 12H11V10H17L19 13L14 18L10 14H5L3 16Z" fill="#eee" stroke="none" />
            <path d="M7 6H14M11 13L14 15L18 11" stroke="#272727" />
          </Glyph>
        </span>
        <span className="flex h-[18px] w-[14px] items-center justify-center bg-[#0b2742]">
          <FaLock className="h-[10px] w-[9px]" />
        </span>
        <span className="ml-[11px] w-[28px]">
          <Glyph size={16}>
            <path d="M3 5L15 2L16 5L6 9L16 9V12L8 17" strokeWidth="2" />
          </Glyph>
        </span>
        <History className="mr-[22px] h-[18px] w-[18px]" strokeWidth={1.6} />
        <FaBluetoothB className="mr-[12px] h-[16px] w-[14px]" />
        <Wifi className="mr-[9px] h-[20px] w-[20px]" strokeWidth={2.5} />
        <Volume2 className="mr-[13px] h-[18px] w-[18px]" fill="currentColor" strokeWidth={1.8} />
        <span className="w-[34px] text-[12px] whitespace-nowrap">100%</span>
        <svg viewBox="0 0 24 14" className="mr-[18px] h-[14px] w-[24px]" aria-label="Battery charging">
          <rect x="1" y="1" width="20" height="12" rx="3" fill="none" stroke="#eee" strokeWidth="1" />
          <rect x="3" y="3" width="16" height="8" rx="1" fill="#eee" />
          <path d="M13 0L7 8H11L9 14L16 6H12Z" fill="#eee" stroke="#272727" strokeWidth="1" />
          <path d="M22 5V9" stroke="#eee" strokeWidth="2" />
        </svg>
        <time className="w-[99px] whitespace-nowrap">Sat 5:04 AM</time>
        <Search className="mr-[16px] h-[15px] w-[15px]" />
        <span className="mr-[11px] h-[16px] w-[16px] rounded-full border border-[#ddd] bg-[conic-gradient(#4fc3f7,#3f51b5,#1a237e,#e91e63,#b39ddb,#4fc3f7)]" />
        <List className="h-[18px] w-[20px] text-[#5a5a5a]" />
      </div>
    </header>
  )
}

function TitleBar() {
  return (
    <div className="flex h-[35px] shrink-0 items-center justify-between border-b border-[#434343] bg-[#535353] pr-[15px] pl-[9px] text-[#d6d6d6]">
      <div className="flex items-center">
        <button type="button" aria-label="Close window" className="flex h-[12px] w-[12px] items-center justify-center rounded-full bg-[#fc5b52]">
          <span className="h-[4px] w-[4px] rounded-full bg-[#5a0c08]" />
        </button>
        <button type="button" aria-label="Minimize window" className="ml-[7px] h-[12px] w-[12px] rounded-full bg-[#fbbc2c]" />
        <button type="button" aria-label="Zoom window" className="ml-[8px] h-[12px] w-[12px] rounded-full bg-[#27c840]" />
        <button type="button" aria-label="Home" className="ml-[17px] text-[#c9c9c9]">
          <FaHome className="h-[17px] w-[19px]" />
        </button>
        <h1 className="ml-[401px] pb-[4px] text-[12px] whitespace-nowrap text-[#eee]">Adobe InDesign 2022</h1>
      </div>
      <div className="flex items-center">
        <button type="button" aria-label="Learn">
          <Glyph size={20}>
            <path d="M8 14C8 11 4.500 10 4.500 6.500A5.500 5.500 0 0 1 15.500 6.500C15.500 10 12 11 12 14Z" />
            <path d="M8 15H12V17L10 19L8 17Z" fill="currentColor" stroke="none" />
          </Glyph>
        </button>
        <button type="button" aria-label="Share" className="ml-[17px]">
          <Share className="h-[18px] w-[18px]" strokeWidth={1.8} />
        </button>
        <button type="button" className="ml-[12px] flex h-[18px] items-center border-x border-[#494949] pr-[11px] pl-[12px] text-[12px] font-bold text-[#f0f0f0]">
          Essentials
          <ChevronDown className="ml-[7px] h-[12px] w-[12px]" />
        </button>
        <label className="ml-[6px] flex h-[19px] w-[127px] items-center rounded-[2px] border border-[#6d6d6d] bg-[#454545] pl-[4px]">
          <Glyph size={16}>
            <g stroke="#2f86ea" strokeWidth="1.800">
              <circle cx="10" cy="7" r="5" />
              <path d="M6 11L1 17" />
            </g>
            <path d="M13 13H20L16.500 17Z" fill="#2f86ea" stroke="none" />
          </Glyph>
          <input
            type="text"
            aria-label="Search Adobe Stock"
            placeholder="Adobe Stock"
            className="w-full min-w-0 bg-transparent pl-[4px] text-[10px] outline-none placeholder:text-[#868686]"
          />
        </label>
      </div>
    </div>
  )
}

function StatusBar() {
  return (
    <footer className="flex h-[17px] shrink-0 items-center bg-[#4a4a4a] text-[11px] text-[#e6e6e6]">
      <div className="flex h-full w-[500px] items-center bg-[#515151] pl-[14px]">
        <button type="button" className="flex w-[60px] items-center font-semibold">
          44.96%
          <ChevronDown className="ml-[2px] h-[11px] w-[11px]" />
        </button>
        <button type="button" aria-label="First page" className="w-[20px]">
          <Glyph size={11}><path d="M3 3V17" strokeWidth="3" /><path d="M16 3V17L6 10Z" fill="currentColor" stroke="none" /></Glyph>
        </button>
        <button type="button" aria-label="Previous page" className="w-[20px]">
          <Glyph size={10}><path d="M14 3V17L5 10Z" fill="currentColor" stroke="none" /></Glyph>
        </button>
        <div className="flex h-[15px] w-[87px] border border-[#666] bg-[#414141]">
          <input type="text" aria-label="Page number" defaultValue="5" className="w-[69px] border-r border-[#666] bg-transparent pl-[3px] font-semibold outline-none" />
          <button type="button" aria-label="Choose page" className="flex flex-1 items-center justify-center">
            <ChevronDown className="h-[11px] w-[11px]" />
          </button>
        </div>
        <button type="button" aria-label="Next page" className="ml-[10px] w-[20px]">
          <Glyph size={10}><path d="M6 3V17L15 10Z" fill="currentColor" stroke="none" /></Glyph>
        </button>
        <button type="button" aria-label="Last page" className="w-[26px]">
          <Glyph size={11}><path d="M17 3V17" strokeWidth="3" /><path d="M4 3V17L14 10Z" fill="currentColor" stroke="none" /></Glyph>
        </button>
        <button type="button" aria-label="Open menu" className="w-[31px]">
          <Glyph size={15}><path d="M5 15A7 7 0 1 1 15 14M9 16V6C9 6 12 6 12 10L13 16" strokeWidth="2" /><path d="M18 15V18" strokeWidth="2.500" /></Glyph>
        </button>
        <button type="button" className="flex w-[122px] items-center font-semibold whitespace-nowrap">
          <span className="w-[98px] text-left text-[10px]">[Basic] (working)</span>
          <ChevronDown className="h-[11px] w-[11px]" />
        </button>
        <span className="mr-[5px] h-[11px] w-[11px] shrink-0 rounded-full bg-[#f53f3c]" />
        <button type="button" className="flex items-center font-semibold whitespace-nowrap">
          <span className="w-[60px] text-left text-[10px]">1 error</span>
          <ChevronDown className="h-[10px] w-[10px]" />
        </button>
      </div>
      <div className="flex h-full flex-1 items-center pl-[147px]">
        <div className="h-[13px] w-[450px] rounded-full bg-[#6b6b6b]" />
      </div>
      <button type="button" aria-label="Split layout view" className="mr-[17px]">
        <Glyph size={16}><path d="M1 5H19V16H1ZM10 5V16" strokeWidth="1.500" /></Glyph>
      </button>
    </footer>
  )
}

export default function App() {
  return (
    <div className="flex h-screen flex-col overflow-hidden bg-[#434343] font-['Open_Sans',sans-serif]">
      <MenuBar />
      <TitleBar />
      <div className="flex min-h-0 flex-1">
        <Toolbar />
        <main className="flex min-w-0 flex-1 flex-col">
          <div className="flex h-[28px] shrink-0 items-stretch bg-[#434343] pt-[1px]">
            <div className="flex items-center bg-[#535353] pr-[7px] pl-[13px] text-[11px] font-semibold whitespace-nowrap text-[#f2f2f2]">
              <button type="button" aria-label="Close document" className="mr-[7px]">
                <X className="h-[10px] w-[10px]" strokeWidth={3} />
              </button>
              *2019-year-in-review-market-update-Lake-Rancho-Viejo.indd @ 45% [GPU Preview]
            </div>
          </div>
          <div className="flex min-h-0 flex-1">
            <div className="flex min-w-0 flex-1 flex-col">
              <TopRuler />
              <div className="flex min-h-0 flex-1">
                <LeftRuler />
                <div className="relative flex-1 overflow-hidden bg-[#5e5e5e]">
                  <Spread />
                  <Guides />
                </div>
              </div>
            </div>
            <div className="w-[15px] bg-[#4a4a4a] px-[1px] pt-[229px]">
              <div className="h-[300px] rounded-full bg-[#6b6b6b]" />
            </div>
          </div>
          <StatusBar />
        </main>
        <Dock />
      </div>
    </div>
  )
}
